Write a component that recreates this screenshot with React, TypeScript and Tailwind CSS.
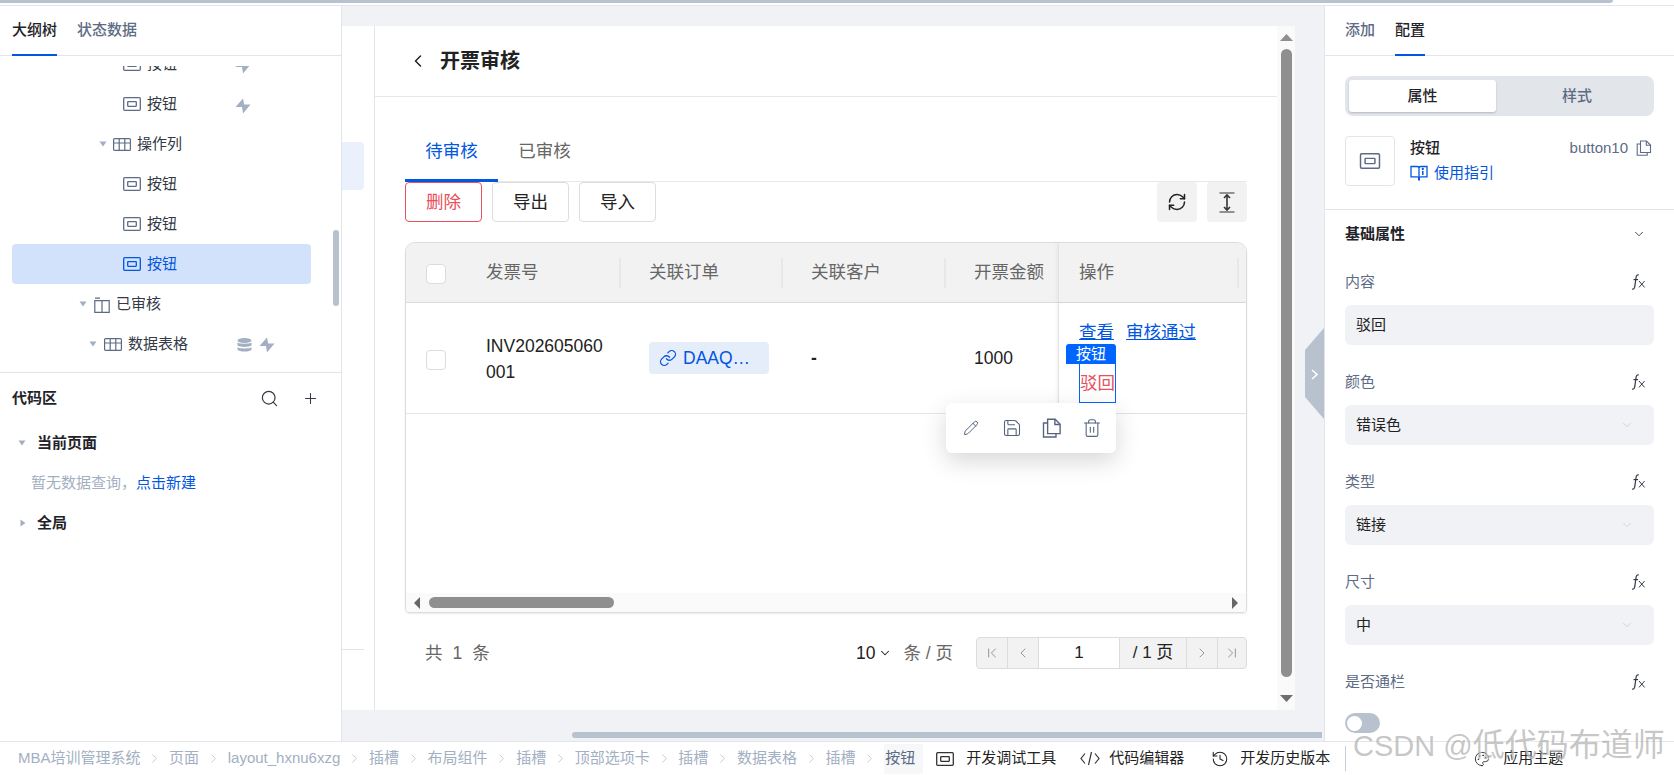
import { ChevronDown, ChevronFirst, ChevronLast, ChevronLeft, ChevronRight, Link, Plus, RefreshCw, Save, Search, Trash2, Pencil, History, Palette } from "lucide-react";

function BtnIcon({ className = "text-[#5d6b85]", big }: { className?: string; big?: boolean }) {
  return (
    <svg width={big ? 22 : 18} height={big ? 16 : 14} viewBox="0 0 18 14" fill="none" stroke="currentColor" strokeWidth="1.3" className={className}>
      <rect x="0.7" y="0.7" width="16.6" height="12.6" rx="1" />
      <rect x="4.7" y="4.7" width="8.6" height="4.6" rx="0.5" />
    </svg>
  );
}

function TableIcon() {
  return (
    <svg width="18" height="13" viewBox="0 0 18 13" fill="none" stroke="#5d6b85" strokeWidth="1.2">
      <rect x="0.6" y="0.6" width="16.8" height="11.8" rx="1" />
      <path d="M0.6 5h16.8M6.2 0.6v11.8M11.8 0.6v11.8" />
    </svg>
  );
}

function TabsIcon() {
  return (
    <svg width="16" height="16" viewBox="0 0 16 16" fill="none" stroke="#5d6b85" strokeWidth="1.2">
      <path d="M1 1.2h5M0.8 3.6h14.4v11.8H0.8zM8 3.6v11.8" />
    </svg>
  );
}

function Bolt() {
  return (
    <svg width="16" height="16" viewBox="0 0 16 16" fill="#a3afc2">
      <path d="M8 0.500 L0.500 9 H7 L8 15.500 L15.500 6.500 H9.200 Z" />
    </svg>
  );
}

function Db() {
  return (
    <svg width="15" height="14" viewBox="0 0 15 14" fill="#a3afc2">
      <ellipse cx="7.5" cy="2.5" rx="7" ry="2.4" />
      <path d="M0.5 4.6c1.5 1.6 12.5 1.6 14 0v3c-1.5 1.7-12.5 1.7-14 0zM0.5 9.2c1.5 1.6 12.5 1.6 14 0v2.3c-1 2.7-13 2.7-14 0z" />
    </svg>
  );
}

function Caret({ open = true }: { open?: boolean }) {
  return open ? (
    <svg width="8" height="6" viewBox="0 0 8 6" fill="#a3afc2"><path d="M0.5 0.5h7L4 5.5z" /></svg>
  ) : (
    <svg width="6" height="8" viewBox="0 0 6 8" fill="#a3afc2"><path d="M0.5 0.5v7L5.5 4z" /></svg>
  );
}

function Fx() {
  return (
    <svg width="15" height="16" viewBox="0 0 15 16" fill="none" stroke="#333a45" strokeWidth="1.2">
      <path d="M7.8 1C6 0.6 5.4 1.5 5 3.6L3.800 12.400C3.500 14.600 2.800 15.400 1 15" />
      <path d="M2.500 5.600h4.600" />
      <path d="M8 7l5.600 6.400M13.600 7L8 13.400" strokeWidth="1" />
    </svg>
  );
}

function DocCopy({ size = 16, color = "#5d6b85" }: { size?: number; color?: string }) {
  return (
    <svg width={size} height={size} viewBox="0 0 16 16" fill="none" stroke={color} strokeWidth="1.1">
      <path d="M4.500 12.500V1h6l4 4v7.500z" />
      <path d="M10.300 1v4.200h4.200" />
      <path d="M4.500 4H1.200v11.200h10V12.500" />
    </svg>
  );
}

function GuideIcon() {
  return (
    <svg width="18" height="16" viewBox="0 0 18 16" fill="none" stroke="#0256e0" strokeWidth="1.3">
      <path d="M1 1.500h6c1.200 0 2 .7 2 1.600v10c0-.8-.8-1.300-2-1.300H1zM17 1.500h-6c-1.200 0-2 .7-2 1.600v10c0-.8.8-1.300 2-1.300h6z" />
      <path d="M12.800 6v4" strokeWidth="1.5" />
      <circle cx="12.800" cy="4" r="0.5" />
      <path d="M9 13v2.500" strokeWidth="2" />
    </svg>
  );
}

function HeightIcon() {
  return (
    <svg width="16" height="21" viewBox="0 0 16 21" fill="none" stroke="#333" strokeWidth="1.2">
      <path d="M0.500 1h15M0.500 20h15" />
      <path d="M8 3v15" strokeWidth="1.6" />
      <path d="M5 6l3-3 3 3M5 15l3 3 3-3" strokeWidth="1.6" />
    </svg>
  );
}

function CodeIcon() {
  return (
    <svg width="20" height="15" viewBox="0 0 20 15" fill="none" stroke="#333" strokeWidth="1.2">
      <path d="M5 2.500L1 7.500l4 5M15 2.500l4 5-4 5M11.500 1L8.500 14" />
    </svg>
  );
}

function TreeRow({ pad, icon, label, active, extra }: { pad: string; icon: React.ReactNode; label: string; active?: boolean; extra?: React.ReactNode }) {
  return (
    <div className={`flex h-10 w-[299px] items-center rounded ${pad} ${active ? "bg-[#d2e2fb] text-[#0256e0]" : "text-[#333a45]"}`}>
      {icon}
      <span className="ml-[6px] whitespace-nowrap">{label}</span>
      {extra}
    </div>
  );
}

function Sidebar() {
  return (
    <aside className="flex w-[342px] shrink-0 flex-col border-r border-[#e3e5ea] bg-white">
      <div className="flex h-[50px] shrink-0 gap-5 border-b border-[#e3e5ea] pl-3">
        <div className="flex h-[50px] items-center border-b-2 border-[#0256e0] font-medium text-[#1f2329]">大纲树</div>
        <div className="flex h-[49px] items-center font-medium text-[#5d6b85]">状态数据</div>
      </div>
      <div className="relative mt-[10px] h-[307px] shrink-0 overflow-hidden border-b border-[#dfe2e8] pl-3">
        <div className="-mt-[22px]">
          <TreeRow pad="pl-[111px]" icon={<BtnIcon />} label="按钮" extra={<span className="ml-[58px] mt-[3px]"><Bolt /></span>} />
          <TreeRow pad="pl-[111px]" icon={<BtnIcon />} label="按钮" extra={<span className="ml-[58px] mt-[3px]"><Bolt /></span>} />
          <TreeRow pad="pl-[87px]" icon={<><Caret /><span className="ml-[6px]"><TableIcon /></span></>} label="操作列" />
          <TreeRow pad="pl-[111px]" icon={<BtnIcon />} label="按钮" />
          <TreeRow pad="pl-[111px]" icon={<BtnIcon />} label="按钮" />
          <TreeRow pad="pl-[111px]" active icon={<BtnIcon className="text-[#0256e0]" />} label="按钮" />
          <TreeRow pad="pl-[67px]" icon={<><Caret /><span className="ml-[7px] mt-[2px] block"><TabsIcon /></span></>} label="已审核" />
          <TreeRow pad="pl-[77px]" icon={<><Caret /><span className="ml-[7px]"><TableIcon /></span></>} label="数据表格" extra={<><span className="ml-[49px] mt-[2px]"><Db /></span><span className="ml-[7px] mt-[2px]"><Bolt /></span></>} />
        </div>
        <div className="absolute left-[333px] top-[164px] h-[76px] w-[6px] rounded-full bg-[#b8c2cf]" />
      </div>
      <div className="flex h-[50px] items-center justify-between pl-3 pr-[22px] pt-[1px]">
        <span className="font-semibold text-[#1f2329]">代码区</span>
        <div className="flex items-center gap-[23px] text-[#333a45]">
          <Search size={19} strokeWidth={1.5} />
          <Plus size={17} strokeWidth={1.5} />
        </div>
      </div>
      <div className="flex h-10 items-center pl-[18px]">
        <Caret />
        <span className="ml-[11px] font-semibold text-[#1f2329]">当前页面</span>
      </div>
      <div className="flex h-10 items-center pl-[31px] text-[#a3afc2]">
        暂无数据查询，<span className="text-[#0256e0]">点击新建</span>
      </div>
      <div className="flex h-10 items-center pl-[20px]">
        <Caret open={false} />
        <span className="ml-[11px] font-semibold text-[#1f2329]">全局</span>
      </div>
    </aside>
  );
}

function Toolbar() {
  return (
    <div className="flex h-10 items-center text-[17.5px] text-[#333]">
      <div className="flex h-10 w-[77px] items-center justify-center rounded border border-[#e8505b] text-[#e8505b]">删除</div>
      <div className="ml-[10px] flex h-10 w-[77px] items-center justify-center rounded border border-[#ddd] text-[#222]">导出</div>
      <div className="ml-[10px] flex h-10 w-[77px] items-center justify-center rounded border border-[#ddd] text-[#222]">导入</div>
      <div className="ml-auto flex h-10 w-10 items-center justify-center rounded bg-[#f2f2f2]">
        <RefreshCw size={20} strokeWidth={1.8} className="text-[#222]" />
      </div>
      <div className="ml-[10px] flex h-10 w-10 items-center justify-center rounded bg-[#f2f2f2]">
        <HeightIcon />
      </div>
    </div>
  );
}

function HeaderCell({ w, label, sep = true }: { w: string; label: string; sep?: boolean }) {
  return (
    <div className={`flex h-full shrink-0 items-center pl-7 ${w}`}>
      <span className="whitespace-nowrap text-[#666]">{label}</span>
      {sep && <span className="ml-auto h-[30px] w-[2px] bg-[#e8e8e8]" />}
    </div>
  );
}

function Checkbox() {
  return <div className="h-5 w-5 rounded border border-[#dcdcdc] bg-white" />;
}

function FloatActions() {
  return (
    <div className="absolute -right-px top-[39px] z-10 flex h-[50px] w-[170px] items-center gap-[20px] rounded-md bg-white pl-[17px] text-[#56647e] shadow-[0_8px_24px_rgba(0,0,0,0.16)]">
      <Pencil size={16} strokeWidth={1.5} />
      <Save size={20} strokeWidth={1.3} className="ml-[3px]" />
      <DocCopy size={20} color="#56647e" />
      <Trash2 size={20} strokeWidth={1.3} />
    </div>
  );
}

function DataTable() {
  return (
    <div className="mt-5 flex h-[371px] w-[842px] flex-col overflow-hidden rounded-t-[10px] rounded-b-[4px] border border-[#dcdcdc] text-[17.5px] shadow-[0_1px_2px_rgba(0,0,0,0.08)]">
      <div className="flex h-[60px] shrink-0 items-center border-b border-[#dcdcdc] bg-[#f2f2f2]">
        <div className="flex w-[52px] shrink-0 items-center pl-5 pt-[3px]"><Checkbox /></div>
        <HeaderCell w="w-[163px]" label="发票号" />
        <HeaderCell w="w-[162px]" label="关联订单" />
        <HeaderCell w="w-[163px]" label="关联客户" />
        <HeaderCell w="w-[112px]" label="开票金额" sep={false} />
        <div className="flex h-full flex-1 items-center border-l border-[#e3e3e3] pl-5 pr-[7px] shadow-[-2px_0_3px_rgba(0,0,0,0.04)]">
          <span className="text-[#666]">操作</span>
          <span className="ml-auto h-[30px] w-[2px] bg-[#e8e8e8]" />
        </div>
      </div>
      <div className="flex h-[111px] shrink-0 items-center border-b border-[#e6e6e6] text-[#222]">
        <div className="flex w-[52px] shrink-0 items-center pl-5 pt-[3px]"><Checkbox /></div>
        <div className="w-[163px] shrink-0 pl-7 pt-[2px] leading-[26px]">INV202605060<br />001</div>
        <div className="w-[162px] shrink-0 pl-7">
          <div className="flex h-8 w-[120px] items-center rounded bg-[#e5edfb] pl-[10px] text-[#0256e0]">
            <Link size={18} strokeWidth={1.7} />
            <span className="ml-[6px]">DAAQ…</span>
          </div>
        </div>
        <div className="w-[163px] shrink-0 pl-7 font-bold">-</div>
        <div className="w-[112px] shrink-0 pl-7">1000</div>
        <div className="h-full flex-1 border-l border-[#e3e3e3] pl-5 pt-4 shadow-[-2px_0_3px_rgba(0,0,0,0.04)]">
          <div className="flex h-[26px] gap-3 leading-[26px] text-[#0256e0] underline underline-offset-1">
            <span>查看</span>
            <span>审核通过</span>
          </div>
          <div className="relative mt-[18px] flex h-10 w-[37px] items-center justify-center border border-[#0065ff] text-[#e8505b]">
            <span className="whitespace-nowrap">驳回</span>
            <div className="absolute -left-[14px] -top-[20px] flex h-5 w-[50px] items-center justify-center rounded-t-[3px] bg-[#0065ff] text-[15px] text-white">按钮</div>
            <FloatActions />
          </div>
        </div>
      </div>
      <div className="flex-1" />
      <div className="flex h-[19px] shrink-0 items-center bg-[#fafafa] pl-2 pr-2">
        <svg width="6" height="12" viewBox="0 0 6 12" fill="#666"><path d="M6 0v12L0 6z" /></svg>
        <div className="ml-[9px] h-[11px] w-[185px] rounded-full bg-[#8f8f8f]" />
        <svg width="6" height="12" viewBox="0 0 6 12" fill="#666" className="ml-auto"><path d="M0 0v12l6-6z" /></svg>
      </div>
    </div>
  );
}

function Pager() {
  const seg = "flex h-full w-[31px] items-center justify-center border-r border-[#dcdcdc] text-[#888]";
  return (
    <div className="flex h-8 w-[271px] items-center overflow-hidden rounded border border-[#dcdcdc] bg-[#f2f2f2] text-[17px]">
      <div className={seg}><ChevronFirst size={16} strokeWidth={1.3} /></div>
      <div className={seg}><ChevronLeft size={16} strokeWidth={1.3} /></div>
      <div className="flex h-full w-[81px] items-center justify-center border-r border-[#dcdcdc] bg-white text-[#222]">1</div>
      <div className="flex h-full w-[67px] items-center justify-center border-r border-[#dcdcdc] text-[#222]">/ 1 页</div>
      <div className={seg}><ChevronRight size={16} strokeWidth={1.3} /></div>
      <div className="flex h-full flex-1 items-center justify-center text-[#888]"><ChevronLast size={16} strokeWidth={1.3} /></div>
    </div>
  );
}

function Canvas() {
  return (
    <div className="flex h-[684px] w-[953px] bg-white">
      <div className="w-[33px] shrink-0 border-r border-[#e3e5ea] pt-[116px]">
        <div className="h-12 w-[22px] rounded-r bg-[#eaf0fc]" />
        <div className="mt-[459px] h-px w-[22px] bg-[#e5e5e5]" />
      </div>
      <div className="flex w-[902px] shrink-0 flex-col">
        <div className="flex h-[71px] shrink-0 items-center border-b border-[#e8e8e8] pl-[33px]">
          <ChevronLeft size={20} strokeWidth={1.8} className="text-[#222]" />
          <span className="ml-[12px] text-[20px] font-bold text-[#222]">开票审核</span>
        </div>
        <div className="px-[30px] pt-[38px]">
          <div className="flex h-[47px] border-b border-[#e8e8e8] text-[17.5px]">
            <div className="flex h-[47px] w-[93px] items-start justify-center border-b-[3px] border-[#0256e0] pt-[3px] text-[#0256e0]">待审核</div>
            <div className="flex h-[46px] w-[93px] items-start justify-center pt-[3px] text-[#666]">已审核</div>
          </div>
          <Toolbar />
          <DataTable />
          <div className="mt-6 flex h-8 items-center text-[17.5px]">
            <div className="flex gap-[10px] pl-5 text-[#666]"><span>共</span><span>1</span><span>条</span></div>
            <div className="ml-auto flex items-center text-[#222]">
              10<ChevronDown size={14} strokeWidth={1.8} className="ml-[3px]" />
              <span className="ml-[11px] mr-[23px] text-[#666]">条 / 页</span>
            </div>
            <Pager />
          </div>
        </div>
      </div>
      <div className="flex w-[18px] shrink-0 flex-col items-center bg-[#fafafa] pt-2">
        <svg width="13" height="7" viewBox="0 0 13 7" fill="#8f8f8f"><path d="M0 7h13L6.500 0z" /></svg>
        <div className="mt-2 h-[628px] w-[11px] rounded-full bg-[#8f8f8f]" />
        <svg width="13" height="7" viewBox="0 0 13 7" fill="#6f6f6f" className="mt-[18px]"><path d="M0 0h13L6.500 7z" /></svg>
      </div>
    </div>
  );
}

function Field({ label, value, select }: { label: string; value?: string; select?: boolean }) {
  return (
    <div className="h-[100px]">
      <div className="flex h-10 items-center justify-between pr-2 text-[#5d6b85]">
        <span>{label}</span>
        <Fx />
      </div>
      {value && (
        <div className="mt-[3px] flex h-10 w-[309px] items-center justify-between rounded-md bg-[#f0f2f6] pl-[11px] pr-[20px] text-[#222]">
          <span>{value}</span>
          {select && <ChevronDown size={14} strokeWidth={1} className="text-[#b8c2cf]" />}
        </div>
      )}
    </div>
  );
}

function RightPanel() {
  return (
    <aside className="flex w-[350px] shrink-0 flex-col border-l border-[#e3e5ea] bg-white">
      <div className="flex h-[50px] shrink-0 gap-5 border-b border-[#e3e5ea] pl-5">
        <div className="flex h-[49px] items-center font-medium text-[#5d6b85]">添加</div>
        <div className="flex h-[50px] items-center border-b-2 border-[#0256e0] font-medium text-[#1f2329]">配置</div>
      </div>
      <div className="h-[154px] shrink-0 border-b border-[#e3e5ea] px-5 pt-5">
        <div className="flex h-10 w-[309px] items-center rounded-lg bg-[#e2e5ea] pl-1">
          <div className="flex h-8 w-[147px] items-center justify-center rounded-[3px] bg-white font-medium text-[#1f2329] shadow-[0_1px_2px_rgba(0,0,0,0.2)]">属性</div>
          <div className="flex h-8 w-[154px] items-center justify-center pl-2 font-medium text-[#5d6b85]">样式</div>
        </div>
        <div className="mt-5 flex w-[309px]">
          <div className="flex h-[50px] w-[50px] items-center justify-center rounded border border-[#e3e5ea]">
            <BtnIcon big className="text-[#5d6b85]" />
          </div>
          <div className="ml-[15px] mt-[2px]">
            <div className="font-medium leading-[20px] text-[#1f2329]">按钮</div>
            <div className="mt-[5px] flex items-center gap-[6px] leading-[20px] text-[#0256e0]"><GuideIcon />使用指引</div>
          </div>
          <div className="ml-auto mt-[2px] flex h-5 items-center gap-2 pr-[2px] text-[#5d6b85]">button10<DocCopy size={16} /></div>
        </div>
      </div>
      <div className="px-5">
        <div className="flex h-12 items-center justify-between pr-2">
          <span className="font-semibold text-[#1f2329]">基础属性</span>
          <ChevronDown size={14} strokeWidth={1.5} className="text-[#333]" />
        </div>
        <div className="mt-[4px]">
          <Field label="内容" value="驳回" />
          <Field label="颜色" value="错误色" select />
          <Field label="类型" value="链接" select />
          <Field label="尺寸" value="中" select />
          <Field label="是否通栏" />
        </div>
        <div className="-mt-[49px] flex h-5 w-[35px] items-center rounded-full bg-[#b8c2cf] pl-[2px]">
          <div className="h-[15px] w-[15px] rounded-full bg-white" />
        </div>
      </div>
    </aside>
  );
}

const crumbs = ["MBA培训管理系统", "页面", "layout_hxnu6xzg", "插槽", "布局组件", "插槽", "顶部选项卡", "插槽", "数据表格", "插槽"];

function BottomBar() {
  return (
    <div className="flex h-[34px] shrink-0 items-center border-t border-[#e3e5ea] bg-white pl-[18px] text-[#222]">
      {crumbs.map((c, i) => (
        <div key={i} className="flex items-center text-[#a3afc2]">
          <span className="whitespace-nowrap">{c}</span>
          <ChevronRight size={15} strokeWidth={1} className="mx-[6.8px]" />
        </div>
      ))}
      <div className="flex h-[30px] items-center bg-[#f6f7f9] pl-[1px] pr-[8px] text-[#5d6b85]">按钮</div>
      <span className="ml-[13px]"><BtnIcon className="text-[#333]" /></span>
      <span className="ml-[12px] whitespace-nowrap">开发调试工具</span>
      <span className="ml-[24px]"><CodeIcon /></span>
      <span className="ml-[9px] whitespace-nowrap">代码编辑器</span>
      <History size={18} strokeWidth={1.4} className="ml-[27px]" />
      <span className="ml-[11px] whitespace-nowrap">开发历史版本</span>
      <span className="ml-[15px] h-[25px] w-px bg-[#c8ced8]" />
      <Palette size={16} strokeWidth={1.3} className="ml-[128px]" />
      <span className="ml-[13px] whitespace-nowrap">应用主题</span>
    </div>
  );
}

export default function App() {
  return (
    <div className="relative flex h-[775px] w-[1674px] flex-col overflow-hidden bg-white text-[15px] [font-family:'Liberation_Sans','Noto_Sans_CJK_SC',sans-serif]">
      <div className="h-[6px] shrink-0 border-b border-[#e3e5ea] bg-white">
        <div className="h-[3px] w-[1613px] rounded-br bg-[#b8c2cf]" />
      </div>
      <div className="relative flex h-[735px] shrink-0">
        <Sidebar />
        <div className="flex min-w-0 flex-1 flex-col bg-[#f0f2f6] pt-5">
          <Canvas />
          <div className="ml-[230px] mt-[22px] h-[6px] w-[750px] rounded-l-full bg-[#b8c2cf]" />
        </div>
        <RightPanel />
        <svg width="20" height="92" viewBox="0 0 20 92" className="absolute left-[1305px] top-[322px]">
          <path d="M19 0 L0 22 V69 L19 91z" fill="#b8c2cf" />
          <path d="M7 42l5 4.500-5 4.500" fill="none" stroke="#fff" strokeWidth="1.6" />
        </svg>
      </div>
      <BottomBar />
      <div className="pointer-events-none absolute left-[1353px] top-[726px] whitespace-nowrap text-[32px] leading-[38px] text-[rgba(150,150,150,0.55)] [text-shadow:1px_1px_1px_rgba(255,255,255,0.6)]"><span className="text-[29px]">CSDN @</span>低代码布道师</div>
    </div>
  );
}
